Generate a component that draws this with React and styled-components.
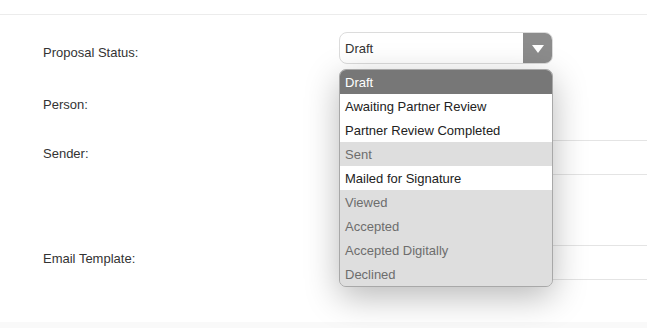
import React from "react";
import styled, { createGlobalStyle } from "styled-components";

const GlobalStyle = createGlobalStyle`
  html, body {
    margin: 0;
    padding: 0;
    background: #fff;
    font-family: "Liberation Sans", Arial, sans-serif;
    overflow: hidden;
  }
`;

const Page = styled.div`
  width: 647px;
  height: 328px;
  background: #fff;
  display: flex;
  flex-direction: column;
`;

const TopBar = styled.div`
  height: 14px;
  border-bottom: 1px solid #ececec;
  flex-shrink: 0;
`;

const Form = styled.div`
  flex: 1;
  display: flex;
  flex-direction: column;
  padding: 17px 0 0 43px;
`;

const Row = styled.div`
  display: flex;
  align-items: flex-start;
  height: ${(p) => p.$h}px;
  margin-bottom: ${(p) => p.$mb || 0}px;
`;

const Label = styled.div`
  width: 296px;
  flex-shrink: 0;
  font-size: 13px;
  line-height: 16px;
  color: #333;
  padding-top: ${(p) => p.$pt}px;
`;

const SelectWrap = styled.div`
  position: relative;
  width: 214px;
  height: 32px;
`;

const SelectBox = styled.div`
  box-sizing: border-box;
  width: 100%;
  height: 100%;
  border: 1px solid #dcdcdc;
  border-radius: 8px;
  display: flex;
  overflow: hidden;
  background: #fff;
`;

const SelectText = styled.div`
  flex: 1;
  font-size: 13px;
  color: #333;
  padding: 1px 0 0 5px;
  line-height: 30px;
`;

const ArrowBtn = styled.div`
  width: 29px;
  background: #8c8c8c;
  display: flex;
  align-items: center;
  justify-content: center;
`;

const Triangle = styled.div`
  width: 0;
  height: 0;
  border-left: 6px solid transparent;
  border-right: 6px solid transparent;
  border-top: 8px solid #fff;
  margin-top: 1px;
`;

const Menu = styled.ul`
  position: absolute;
  top: 37px;
  left: 0;
  width: 214px;
  box-sizing: border-box;
  margin: 0;
  padding: 0;
  list-style: none;
  border: 1px solid #a8a8a8;
  border-radius: 7px;
  overflow: hidden;
  background: #dedede;
  box-shadow: 0 10px 34px rgba(0, 0, 0, 0.28);
  z-index: 5;
`;

const Option = styled.li`
  height: 24px;
  box-sizing: border-box;
  padding: 1px 0 0 5px;
  line-height: 23px;
  font-size: 13px;
  white-space: nowrap;
  background: ${(p) => (p.$kind === "selected" ? "#777" : p.$kind === "enabled" ? "#fff" : "#dedede")};
  color: ${(p) => (p.$kind === "selected" ? "#fff" : p.$kind === "enabled" ? "#222" : "#6d6d6d")};
`;

const FieldBox = styled.div`
  flex: 1;
  height: 35px;
  box-sizing: border-box;
  border-top: 1px solid #e4e4e4;
  border-bottom: 1px solid #e4e4e4;
`;

const Footer = styled.div`
  height: 6px;
  background: #f9f9f9;
  flex-shrink: 0;
`;

const options = [
  { label: "Draft", kind: "selected" },
  { label: "Awaiting Partner Review", kind: "enabled" },
  { label: "Partner Review Completed", kind: "enabled" },
  { label: "Sent", kind: "disabled" },
  { label: "Mailed for Signature", kind: "enabled" },
  { label: "Viewed", kind: "disabled" },
  { label: "Accepted", kind: "disabled" },
  { label: "Accepted Digitally", kind: "disabled" },
  { label: "Declined", kind: "disabled" },
];

export default function App() {
  return (
    <>
      <GlobalStyle />
      <Page>
        <TopBar />
        <Form>
          <Row $h={32} $mb={24}>
            <Label $pt={13}>Proposal Status:</Label>
            <SelectWrap>
              <SelectBox>
                <SelectText>Draft</SelectText>
                <ArrowBtn>
                  <Triangle />
                </ArrowBtn>
              </SelectBox>
              <Menu>
                {options.map((o) => (
                  <Option key={o.label} $kind={o.kind}>
                    {o.label}
                  </Option>
                ))}
              </Menu>
            </SelectWrap>
          </Row>
          <Row $h={35} $mb={17}>
            <Label $pt={9}>Person:</Label>
          </Row>
          <Row $h={35} $mb={70}>
            <Label $pt={6}>Sender:</Label>
            <FieldBox />
          </Row>
          <Row $h={35}>
            <Label $pt={6}>Email Template:</Label>
            <FieldBox />
          </Row>
        </Form>
        <Footer />
      </Page>
    </>
  );
}
